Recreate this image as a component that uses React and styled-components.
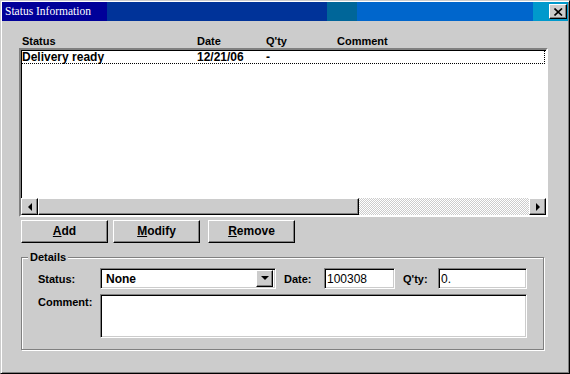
import React from 'react';
import styled, { createGlobalStyle } from 'styled-components';

const Global = createGlobalStyle`
  html, body { margin: 0; padding: 0; background: #cccccc; }
  #root { width: 570px; height: 374px; }
  * { box-sizing: border-box; }
`;

const Window = styled.div`
  width: 570px;
  height: 374px;
  background: #cccccc;
  border: 1px solid;
  border-color: #cccccc #000000 #000000 #cccccc;
  box-shadow: inset 1px 1px 0 #ffffff, inset -1px -1px 0 #808080;
  padding: 1px 1px 0 1px;
  display: flex;
  flex-direction: column;
  font-family: "Liberation Sans", Arial, sans-serif;
  font-size: 11px;
  color: #000;
`;

const TitleBar = styled.div`
  height: 19px;
  display: flex;
  align-items: center;
  justify-content: space-between;
  padding: 0 1px 0 3px;
  background: linear-gradient(
    to right,
    #000099 0 105px,
    #003399 105px 325px,
    #006699 325px 355px,
    #0066cc 355px 531px,
    #0099cc 531px 100%
  );
`;

const Title = styled.span`
  font-family: "Liberation Serif", "Times New Roman", serif;
  font-size: 11.5px;
  color: #ffffff;
  line-height: 19px;
`;

const CloseButton = styled.div`
  width: 18px;
  height: 15px;
  background: #cccccc;
  border: 1px solid;
  border-color: #ffffff #000000 #000000 #ffffff;
  box-shadow: inset -1px -1px 0 #808080;
  display: flex;
  align-items: center;
  justify-content: center;
`;

const Content = styled.div`
  padding: 14px 0 0 17px;
  display: flex;
  flex-direction: column;
`;

const HeaderRow = styled.div`
  height: 13px;
  display: grid;
  grid-template-columns: 175px 69px 71px 1fr;
  padding-left: 3px;
  font-weight: bold;
  line-height: 13px;
  width: 529px;
`;

const ListBox = styled.div`
  width: 529px;
  height: 169px;
  border: 2px solid;
  border-color: #808080 #ffffff #ffffff #808080;
  box-shadow: inset 1px 1px 0 #000000;
  background: #ffffff;
  display: flex;
  flex-direction: column;
`;

const Rows = styled.div`
  flex: 1;
  padding: 0 1px 0 0;
`;

const Row = styled.div`
  height: 14px;
  display: grid;
  grid-template-columns: 175px 69px 71px 1fr;
  line-height: 12px;
  font-size: 12px;
  font-weight: bold;
  border: 1px dotted #000000;
`;

const ScrollBar = styled.div`
  height: 17px;
  display: flex;
`;

const ScrollButton = styled.div`
  width: 17px;
  height: 17px;
  background: #cccccc;
  border: 1px solid;
  border-color: #ffffff #000000 #000000 #ffffff;
  box-shadow: inset -1px -1px 0 #808080;
  display: flex;
  align-items: center;
  justify-content: center;
`;

const Thumb = styled.div`
  width: 321px;
  height: 17px;
  background: #cccccc;
  border: 1px solid;
  border-color: #ffffff #000000 #000000 #ffffff;
  box-shadow: inset -1px -1px 0 #808080;
`;

const Track = styled.div`
  flex: 1;
  height: 17px;
  background: repeating-conic-gradient(#ffffff 0 25%, #cccccc 0 50%) 0 0 / 2px 2px;
`;

const ButtonRow = styled.div`
  display: flex;
  margin-top: 3px;
  padding-left: 2px;
`;

const Button = styled.div`
  width: 87px;
  height: 23px;
  margin-right: ${p => p.$gap || 5}px;
  background: #cccccc;
  border: 1px solid;
  border-color: #ffffff #000000 #000000 #ffffff;
  box-shadow: inset -1px -1px 0 #808080;
  display: flex;
  align-items: center;
  justify-content: center;
  font-weight: bold;
  font-size: 12px;
  padding-bottom: 1px;
`;

const Group = styled.div`
  position: relative;
  width: 523px;
  margin: 14px 0 0 2px;
  border: 1px solid #808080;
  box-shadow: 1px 1px 0 #ffffff, inset 1px 1px 0 #ffffff;
  padding: 10px 0 11px 16px;
  display: flex;
  flex-direction: column;
  gap: 5px;
`;

const Legend = styled.span`
  position: absolute;
  left: 6px;
  top: -8px;
  background: #cccccc;
  padding: 0 2px;
  font-weight: bold;
  line-height: 14px;
`;

const FieldRow = styled.div`
  display: flex;
  align-items: ${p => (p.$top ? 'flex-start' : 'center')};
`;

const Label = styled.span`
  width: ${p => p.$w}px;
  font-weight: bold;
  padding-top: ${p => (p.$top ? 2 : 0)}px;
`;

const Sunken = styled.div`
  width: ${p => p.$w}px;
  height: ${p => p.$h || 21}px;
  margin-right: ${p => p.$mr || 0}px;
  background: #ffffff;
  border: 1px solid;
  border-color: #808080 #ffffff #ffffff #808080;
  box-shadow: inset 1px 1px 0 #000000, inset -1px -1px 0 #cccccc;
  display: flex;
  align-items: ${p => (p.$top ? 'flex-start' : 'center')};
  padding: 0 2px 0 2px;
  font-weight: ${p => (p.$bold ? 'bold' : 'normal')};
  font-size: 12px;
`;

const ComboText = styled.span`
  flex: 1;
  padding-left: 3px;
`;

const ComboButton = styled.div`
  width: 17px;
  height: 17px;
  background: #cccccc;
  border: 1px solid;
  border-color: #ffffff #000000 #000000 #ffffff;
  box-shadow: inset -1px -1px 0 #808080;
  display: flex;
  align-items: center;
  justify-content: center;
`;

const Tri = ({ dir }) => {
  const pts = {
    left: '5,1 1,5 5,9',
    right: '1,1 5,5 1,9',
    down: '0,2 8,2 4,6',
  }[dir];
  const w = dir === 'down' ? 8 : 6;
  return (
    <svg width={w} height="10" viewBox={`0 0 ${w} 10`}>
      <polygon points={pts} fill="#000" />
    </svg>
  );
};

export default function App() {
  return (
    <>
      <Global />
      <Window>
        <TitleBar>
          <Title>Status Information</Title>
          <CloseButton>
            <svg width="9" height="8" viewBox="0 0 9 8">
              <path d="M0.5 0.5 L8 7.5 M8 0.5 L0.5 7.5" stroke="#000" strokeWidth="1.6" />
            </svg>
          </CloseButton>
        </TitleBar>
        <Content>
          <HeaderRow>
            <span>Status</span>
            <span>Date</span>
            <span>Q'ty</span>
            <span>Comment</span>
          </HeaderRow>
          <ListBox>
            <Rows>
              <Row>
                <span>Delivery ready</span>
                <span>12/21/06</span>
                <span>-</span>
                <span></span>
              </Row>
            </Rows>
            <ScrollBar>
              <ScrollButton><Tri dir="left" /></ScrollButton>
              <Thumb />
              <Track />
              <ScrollButton><Tri dir="right" /></ScrollButton>
            </ScrollBar>
          </ListBox>
          <ButtonRow>
            <Button><span><u>A</u>dd</span></Button>
            <Button $gap={8}><span><u>M</u>odify</span></Button>
            <Button><span><u>R</u>emove</span></Button>
          </ButtonRow>
          <Group>
            <Legend>Details</Legend>
            <FieldRow>
              <Label $w={62}>Status:</Label>
              <Sunken $w={176} $mr={8} $bold>
                <ComboText>None</ComboText>
                <ComboButton><Tri dir="down" /></ComboButton>
              </Sunken>
              <Label $w={40}>Date:</Label>
              <Sunken $w={71} $mr={8}>100308</Sunken>
              <Label $w={35}>Q'ty:</Label>
              <Sunken $w={89}>0.</Sunken>
            </FieldRow>
            <FieldRow $top>
              <Label $w={62} $top>Comment:</Label>
              <Sunken $w={427} $h={44} $top />
            </FieldRow>
          </Group>
        </Content>
      </Window>
    </>
  );
}
